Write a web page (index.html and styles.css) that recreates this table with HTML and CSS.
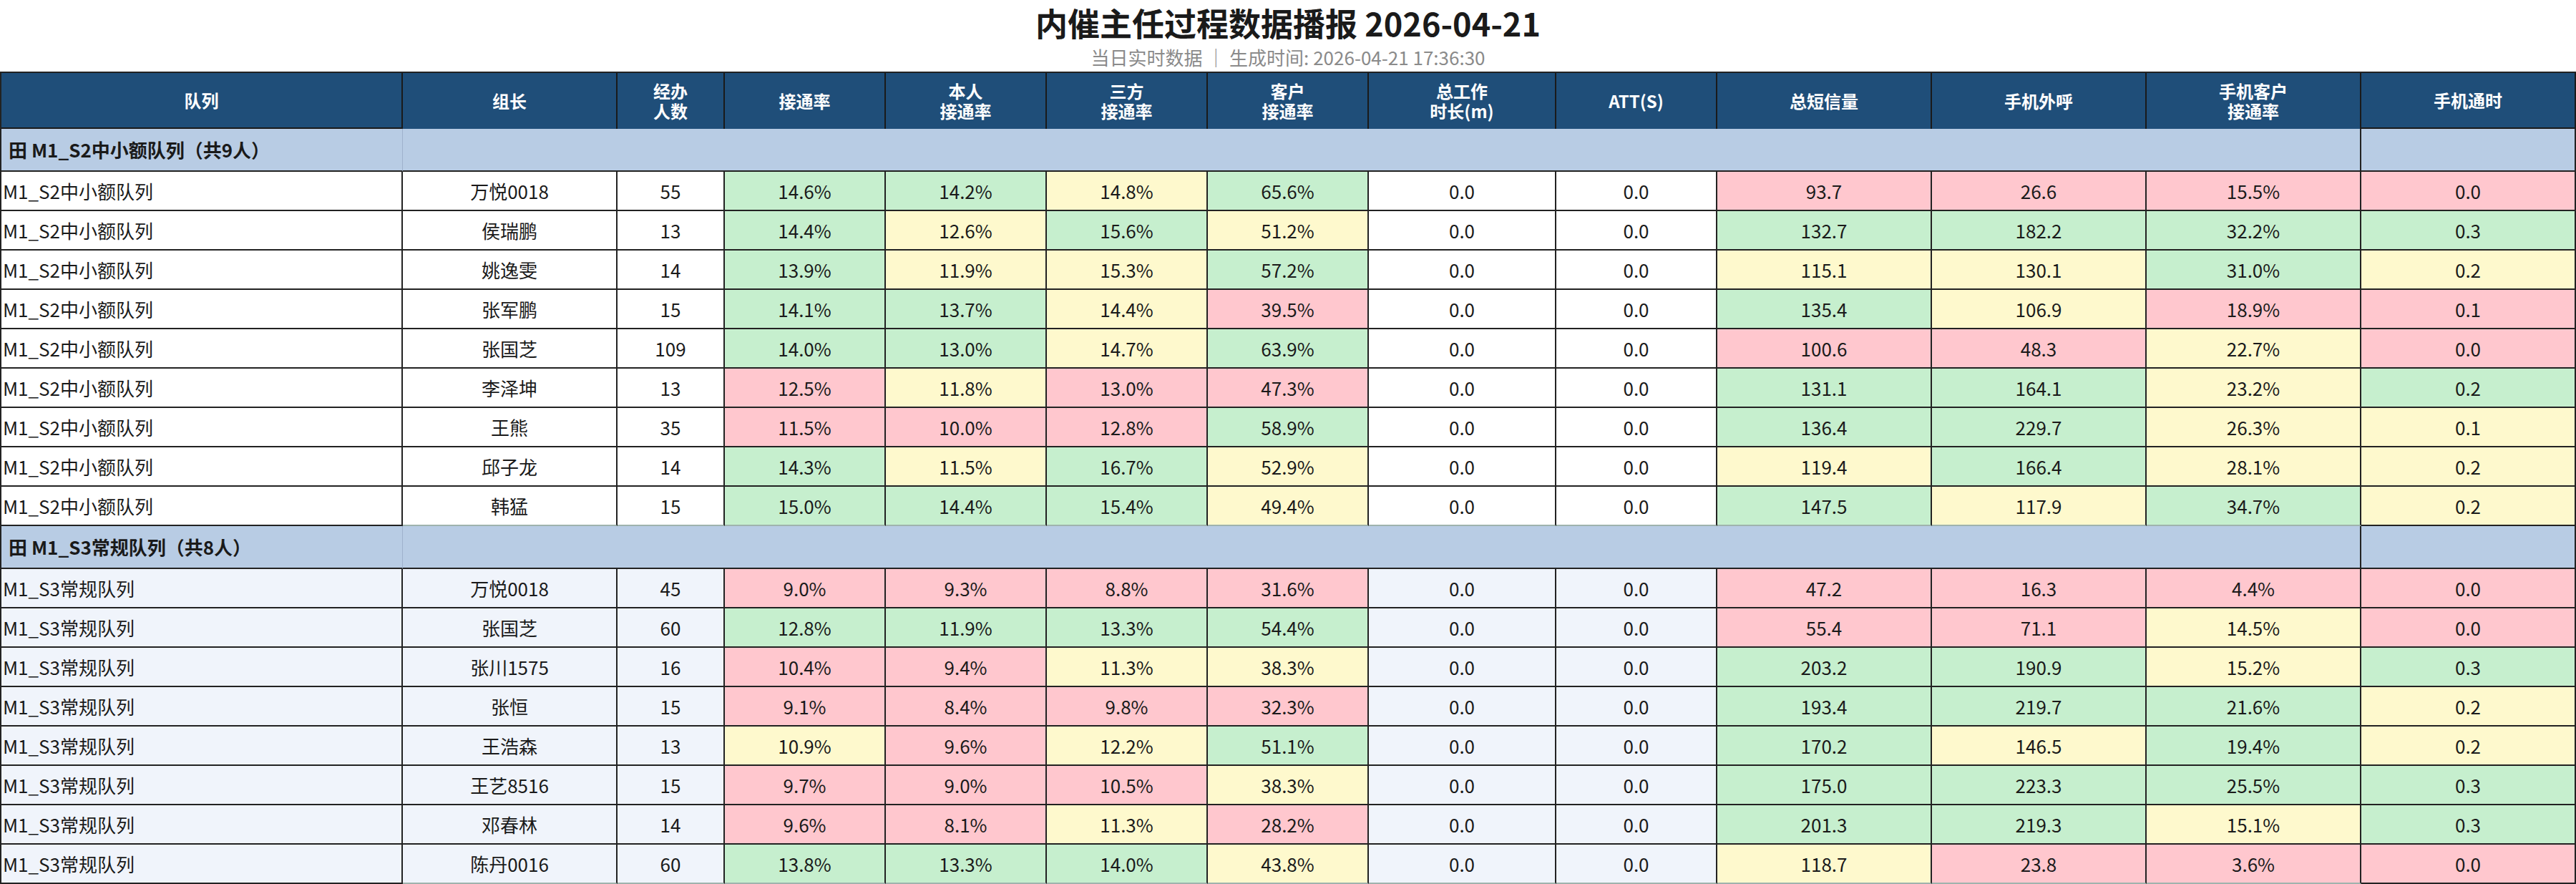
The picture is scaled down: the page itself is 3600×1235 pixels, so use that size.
FILE: index.html
```html
<!DOCTYPE html>
<html lang="zh-CN">
<head>
<meta charset="utf-8">
<title>内催主任过程数据播报</title>
<link rel="stylesheet" href="styles.css">
</head>
<body>
<header class="report-head">
  <h1 class="title">内催主任过程数据播报 2026-04-21</h1>
  <div class="sub">当日实时数据 ｜ 生成时间: 2026-04-21 17:36:30</div>
</header>
<table class="report">
  <colgroup>
    <col class="c-queue"><col class="c-lead"><col class="c-num">
    <col class="c-rate"><col class="c-rate"><col class="c-rate"><col class="c-rate">
    <col class="c-work"><col class="c-rate">
    <col class="c-wide"><col class="c-wide"><col class="c-wide"><col class="c-wide">
  </colgroup>
  <thead>
    <tr class="head">
      <th class="edge">队列</th><th>组长</th><th>经办<br>人数</th><th>接通率</th><th>本人<br>接通率</th><th>三方<br>接通率</th><th>客户<br>接通率</th><th>总工作<br>时长(m)</th><th>ATT(S)</th><th>总短信量</th><th>手机外呼</th><th>手机客户<br>接通率</th><th class="edge">手机通时</th>
    </tr>
  </thead>
  <tbody>
    <tr class="grp"><td class="grp-name">田 M1_S2中小额队列（共9人）</td><td class="grp-fill" colspan="11"></td><td class="grp-end"></td></tr>
    <tr><td class="q">M1_S2中小额队列</td><td>万悦0018</td><td>55</td><td class="g">14.6%</td><td class="g">14.2%</td><td class="y">14.8%</td><td class="g">65.6%</td><td>0.0</td><td>0.0</td><td class="p">93.7</td><td class="p">26.6</td><td class="p">15.5%</td><td class="p">0.0</td></tr>
    <tr><td class="q">M1_S2中小额队列</td><td>侯瑞鹏</td><td>13</td><td class="g">14.4%</td><td class="y">12.6%</td><td class="g">15.6%</td><td class="y">51.2%</td><td>0.0</td><td>0.0</td><td class="g">132.7</td><td class="g">182.2</td><td class="g">32.2%</td><td class="g">0.3</td></tr>
    <tr><td class="q">M1_S2中小额队列</td><td>姚逸雯</td><td>14</td><td class="g">13.9%</td><td class="y">11.9%</td><td class="y">15.3%</td><td class="g">57.2%</td><td>0.0</td><td>0.0</td><td class="y">115.1</td><td class="y">130.1</td><td class="g">31.0%</td><td class="y">0.2</td></tr>
    <tr><td class="q">M1_S2中小额队列</td><td>张军鹏</td><td>15</td><td class="g">14.1%</td><td class="g">13.7%</td><td class="y">14.4%</td><td class="p">39.5%</td><td>0.0</td><td>0.0</td><td class="g">135.4</td><td class="y">106.9</td><td class="p">18.9%</td><td class="p">0.1</td></tr>
    <tr><td class="q">M1_S2中小额队列</td><td>张国芝</td><td>109</td><td class="g">14.0%</td><td class="g">13.0%</td><td class="y">14.7%</td><td class="g">63.9%</td><td>0.0</td><td>0.0</td><td class="p">100.6</td><td class="p">48.3</td><td class="y">22.7%</td><td class="p">0.0</td></tr>
    <tr><td class="q">M1_S2中小额队列</td><td>李泽坤</td><td>13</td><td class="p">12.5%</td><td class="y">11.8%</td><td class="p">13.0%</td><td class="p">47.3%</td><td>0.0</td><td>0.0</td><td class="g">131.1</td><td class="g">164.1</td><td class="y">23.2%</td><td class="g">0.2</td></tr>
    <tr><td class="q">M1_S2中小额队列</td><td>王熊</td><td>35</td><td class="p">11.5%</td><td class="p">10.0%</td><td class="p">12.8%</td><td class="g">58.9%</td><td>0.0</td><td>0.0</td><td class="g">136.4</td><td class="g">229.7</td><td class="y">26.3%</td><td class="y">0.1</td></tr>
    <tr><td class="q">M1_S2中小额队列</td><td>邱子龙</td><td>14</td><td class="g">14.3%</td><td class="y">11.5%</td><td class="g">16.7%</td><td class="y">52.9%</td><td>0.0</td><td>0.0</td><td class="y">119.4</td><td class="g">166.4</td><td class="y">28.1%</td><td class="y">0.2</td></tr>
    <tr class="last"><td class="q">M1_S2中小额队列</td><td>韩猛</td><td>15</td><td class="g">15.0%</td><td class="g">14.4%</td><td class="g">15.4%</td><td class="y">49.4%</td><td>0.0</td><td>0.0</td><td class="g">147.5</td><td class="y">117.9</td><td class="g">34.7%</td><td class="y">0.2</td></tr>

    <tr class="grp"><td class="grp-name">田 M1_S3常规队列（共8人）</td><td class="grp-fill" colspan="11"></td><td class="grp-end"></td></tr>
    <tr class="alt"><td class="q">M1_S3常规队列</td><td>万悦0018</td><td>45</td><td class="p">9.0%</td><td class="p">9.3%</td><td class="p">8.8%</td><td class="p">31.6%</td><td>0.0</td><td>0.0</td><td class="p">47.2</td><td class="p">16.3</td><td class="p">4.4%</td><td class="p">0.0</td></tr>
    <tr class="alt"><td class="q">M1_S3常规队列</td><td>张国芝</td><td>60</td><td class="g">12.8%</td><td class="g">11.9%</td><td class="g">13.3%</td><td class="g">54.4%</td><td>0.0</td><td>0.0</td><td class="p">55.4</td><td class="p">71.1</td><td class="y">14.5%</td><td class="p">0.0</td></tr>
    <tr class="alt"><td class="q">M1_S3常规队列</td><td>张川1575</td><td>16</td><td class="p">10.4%</td><td class="p">9.4%</td><td class="y">11.3%</td><td class="y">38.3%</td><td>0.0</td><td>0.0</td><td class="g">203.2</td><td class="g">190.9</td><td class="y">15.2%</td><td class="g">0.3</td></tr>
    <tr class="alt"><td class="q">M1_S3常规队列</td><td>张恒</td><td>15</td><td class="p">9.1%</td><td class="p">8.4%</td><td class="p">9.8%</td><td class="p">32.3%</td><td>0.0</td><td>0.0</td><td class="g">193.4</td><td class="g">219.7</td><td class="g">21.6%</td><td class="y">0.2</td></tr>
    <tr class="alt"><td class="q">M1_S3常规队列</td><td>王浩森</td><td>13</td><td class="y">10.9%</td><td class="p">9.6%</td><td class="y">12.2%</td><td class="g">51.1%</td><td>0.0</td><td>0.0</td><td class="g">170.2</td><td class="y">146.5</td><td class="g">19.4%</td><td class="y">0.2</td></tr>
    <tr class="alt"><td class="q">M1_S3常规队列</td><td>王艺8516</td><td>15</td><td class="p">9.7%</td><td class="p">9.0%</td><td class="p">10.5%</td><td class="y">38.3%</td><td>0.0</td><td>0.0</td><td class="g">175.0</td><td class="g">223.3</td><td class="g">25.5%</td><td class="g">0.3</td></tr>
    <tr class="alt"><td class="q">M1_S3常规队列</td><td>邓春林</td><td>14</td><td class="p">9.6%</td><td class="p">8.1%</td><td class="y">11.3%</td><td class="p">28.2%</td><td>0.0</td><td>0.0</td><td class="g">201.3</td><td class="g">219.3</td><td class="y">15.1%</td><td class="g">0.3</td></tr>
    <tr class="alt last"><td class="q">M1_S3常规队列</td><td>陈丹0016</td><td>60</td><td class="g">13.8%</td><td class="g">13.3%</td><td class="g">14.0%</td><td class="y">43.8%</td><td>0.0</td><td>0.0</td><td class="y">118.7</td><td class="p">23.8</td><td class="p">3.6%</td><td class="p">0.0</td></tr>
  </tbody>
</table>
</body>
</html>
```

FILE: styles.css
```css
html, body {
  margin: 0;
  padding: 0;
  background: #ffffff;
}

body {
  font-family: "Noto Sans CJK SC", "Noto Sans", sans-serif;
  color: #1a1a1a;
  width: 3600px;
}

.report-head {
  height: 100px;
  display: flex;
  flex-direction: column;
  align-items: center;
  box-sizing: border-box;
}

.title {
  margin: 3px 0 0;
  font-size: 45px;
  line-height: 58px;
  font-weight: 700;
  color: #1a1a1a;
}

.sub {
  margin-top: 2px;
  font-size: 26px;
  line-height: 34px;
  color: #8a8a8a;
}

.report {
  width: 3600px;
  table-layout: fixed;
  border-collapse: separate;
  border-spacing: 0;
  border-top: 2px solid #222;
  border-left: 2px solid #222;
  font-size: 26px;
}

.c-queue { width: 561px; }
.c-lead { width: 300px; }
.c-num { width: 150px; }
.c-rate { width: 225px; }
.c-work { width: 262px; }
.c-wide { width: 300px; }

.report th,
.report td {
  box-sizing: border-box;
  padding: 0 4px;
  text-align: center;
  vertical-align: middle;
  white-space: nowrap;
  overflow: hidden;
}

.report th {
  background: #1f4e79;
  color: #ffffff;
  font-size: 24px;
  font-weight: 700;
  line-height: 28px;
  border-right: 2px solid #1a1a1a;
}

.report th.edge {
  border-bottom: 2px solid #1a1a1a;
}

.head {
  height: 78px;
}

.report td {
  border-right: 2px solid #222;
  border-bottom: 2px solid #222;
  line-height: 30px;
  background: #ffffff;
}

.report tbody tr {
  height: 55px;
}

.report td.q {
  text-align: left;
  padding-left: 2px;
}

.report tr.alt td {
  background: #f0f4fb;
}

.report tr td.g { background: #c6efce; }
.report tr td.y { background: #fef9cd; }
.report tr td.p { background: #ffc7ce; }

.report tr.last td:not(:first-child):not(:last-child) {
  border-bottom-color: #9fb3ad;
}

.report tr.grp {
  height: 60px;
}

.report tr.grp td {
  background: #b8cce4;
}

.report td.grp-name {
  text-align: left;
  padding-left: 10px;
  font-weight: 700;
  border-right: 1px solid #9fb2cc;
}

.report td.grp-fill {
  border-right: 2px solid #222;
}
```
